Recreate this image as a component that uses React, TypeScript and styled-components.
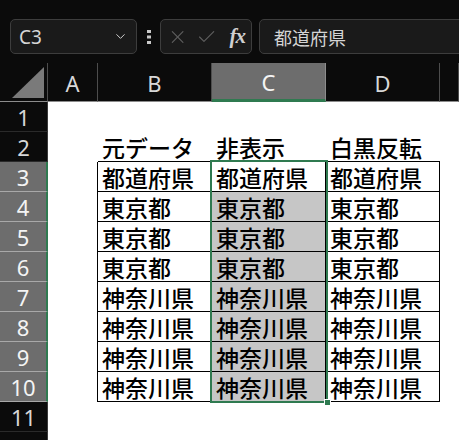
import React from 'react'
import styled, { createGlobalStyle } from 'styled-components'
import { ChevronDown, X, Check } from 'lucide-react'

const GlobalStyle = createGlobalStyle`
  html, body {
    margin: 0;
    background: #0b0b0b;
    overflow: hidden;
  }
  * {
    box-sizing: border-box;
  }
`

const GREEN = '#2f7a50'
const UI_FONT = `"Noto Sans", "Liberation Sans", Arial, sans-serif`
const CELL_FONT = `"Noto Sans CJK JP", "Noto Sans", sans-serif`

const Toolbar = styled.div`
  display: flex;
  align-items: flex-start;
  height: 63px;
  padding: 19px 0 0 10px;
  background: #0b0b0b;
  font-family: ${UI_FONT};
`

const FieldBox = styled.div<{ $width?: number }>`
  display: flex;
  align-items: center;
  height: 35px;
  width: ${({ $width }) => ($width ? `${$width}px` : 'auto')};
  flex: ${({ $width }) => ($width ? '0 0 auto' : '1 0 auto')};
  border: 1px solid #3d3d3d;
  border-radius: 5px;
  background: #1a1a1a;
  color: #d6d6d6;
`

const NameBox = styled(FieldBox)`
  justify-content: space-between;
  padding: 0 8px 0 8px;
  font-size: 19px;
`

const Grip = styled.svg`
  flex: 0 0 auto;
  margin: 11px 9px 0 10px;
`

const Buttons = styled(FieldBox)`
  gap: 8px;
  padding: 0 6px 0 6px;
  color: #5e5e5e;
`

const Fx = styled.span`
  margin-left: 4px;
  font-family: "Liberation Serif", "DejaVu Serif", serif;
  font-style: italic;
  font-weight: bold;
  font-size: 21px;
  color: #cfcfcf;
  letter-spacing: -1px;
`

const FormulaInput = styled(FieldBox)`
  margin: 0 -20px 0 7px;
  padding-left: 14px;
  font-family: ${CELL_FONT};
  font-size: 18px;
  color: #d4d4d4;
`

const Sheet = styled.div`
  display: grid;
  grid-template-columns: 48px 50px 114px 114px 114px 1fr;
  grid-template-rows: 39px repeat(12, 30px);
  background: #ffffff;
`

// every sheet item sits on its own grid line pair so the selection frame can overlap
const Slot = styled.div<{ $row: number; $col: number }>`
  grid-row: ${({ $row }) => $row};
  grid-column: ${({ $col }) => $col};
`

const Corner = styled(Slot)`
  display: flex;
  align-items: flex-end;
  justify-content: flex-end;
  padding: 0 3px 3px 0;
  background: #0b0b0b;
  border-right: 1px solid #4d4d4d;
  border-bottom: 1px solid #8c8c8c;
`

const ColHeader = styled(Slot)<{ $active?: boolean }>`
  display: flex;
  align-items: center;
  justify-content: center;
  padding-top: 2px;
  background: ${({ $active }) => ($active ? '#6d6d6d' : '#0b0b0b')};
  color: ${({ $active }) => ($active ? '#f4f4f4' : '#d8d8d8')};
  border-right: 1px solid ${({ $active }) => ($active ? '#8c8c8c' : '#4d4d4d')};
  border-bottom: ${({ $active }) => ($active ? `3px solid ${GREEN}` : '1px solid #8c8c8c')};
  font-family: ${UI_FONT};
  font-size: 22px;
`

const RowHeader = styled(Slot)<{ $active?: boolean }>`
  display: flex;
  align-items: center;
  justify-content: center;
  background: ${({ $active }) => ($active ? '#6d6d6d' : '#0b0b0b')};
  color: ${({ $active }) => ($active ? '#f4f4f4' : '#d8d8d8')};
  border-right: ${({ $active }) => ($active ? `2px solid ${GREEN}` : '1px solid #3a3a3a')};
  border-bottom: 1px solid ${({ $active }) => ($active ? '#a8a8a8' : '#2a2a2a')};
  font-family: ${UI_FONT};
  font-size: 22px;
  line-height: 28px;
  padding-top: 1px;
`

const Cell = styled(Slot)<{ $boxed?: boolean; $under?: boolean; $edge?: boolean; $shade?: boolean }>`
  display: flex;
  align-items: flex-end;
  padding: 0 0 0 4px;
  overflow: hidden;
  white-space: nowrap;
  background: ${({ $shade }) => ($shade ? '#c6c6c6' : '#ffffff')};
  border-right: ${({ $boxed, $edge }) => ($boxed || $edge ? '1px solid #000' : 'none')};
  border-bottom: ${({ $boxed, $under }) => ($boxed || $under ? '1px solid #000' : 'none')};
  color: #000;
  font-family: ${CELL_FONT};
  font-size: 23px;
  font-weight: 500;
  line-height: 28px;
`

const Selection = styled.div`
  position: relative;
  grid-column: 4;
  grid-row: 4 / 12;
  margin: -2px -2px -1px -2px;
  border: 2px solid ${GREEN};
  pointer-events: none;
`

const FillHandle = styled.span`
  position: absolute;
  right: -5px;
  bottom: -5px;
  width: 7px;
  height: 7px;
  background: ${GREEN};
  border: 1px solid #fff;
`

const rows: string[][] = [
  ['', '', '', ''],
  ['', '元データ', '非表示', '白黒反転'],
  ['', '都道府県', '都道府県', '都道府県'],
  ['', '東京都', '東京都', '東京都'],
  ['', '東京都', '東京都', '東京都'],
  ['', '東京都', '東京都', '東京都'],
  ['', '神奈川県', '神奈川県', '神奈川県'],
  ['', '神奈川県', '神奈川県', '神奈川県'],
  ['', '神奈川県', '神奈川県', '神奈川県'],
  ['', '神奈川県', '神奈川県', '神奈川県'],
  ['', '', '', ''],
  ['', '', '', ''],
]

const columns = ['A', 'B', 'C', 'D', '']

export default function App() {
  return (
    <>
      <GlobalStyle />
      <Toolbar>
        <NameBox $width={127}>
          <span>C3</span>
          <ChevronDown size={15} strokeWidth={1.6} color="#cfcfcf" />
        </NameBox>
        <Grip width="4" height="14" viewBox="0 0 4 14">
          <rect x="0" y="0" width="4" height="3" fill="#c8c8c8" />
          <rect x="0" y="5.5" width="4" height="3" fill="#c8c8c8" />
          <rect x="0" y="11" width="4" height="3" fill="#c8c8c8" />
        </Grip>
        <Buttons $width={92}>
          <X size={22} strokeWidth={1.3} />
          <Check size={22} strokeWidth={1.3} />
          <Fx>fx</Fx>
        </Buttons>
        <FormulaInput>都道府県</FormulaInput>
      </Toolbar>
      <Sheet>
        <Corner $row={1} $col={1}>
          <svg width="32" height="31" viewBox="0 0 32 31">
            <polygon points="0,31 32,0 32,31" fill="#7a7a7a" />
          </svg>
        </Corner>
        {columns.map((c, i) => (
          <ColHeader key={i} $row={1} $col={i + 2} $active={c === 'C'}>
            {c}
          </ColHeader>
        ))}
        {rows.map((row, r) => {
          const n = r + 1
          const inTable = n >= 3 && n <= 10
          return (
            <React.Fragment key={n}>
              <RowHeader $row={n + 1} $col={1} $active={inTable}>
                {n}
              </RowHeader>
              {row.map((text, c) => (
                <Cell
                  key={c}
                  $row={n + 1}
                  $col={c + 2}
                  $boxed={inTable && c > 0}
                  $edge={inTable && c === 0}
                  $under={n === 2 && c > 0}
                  $shade={c === 2 && n >= 4 && n <= 10}
                >
                  {text}
                </Cell>
              ))}
              <Cell $row={n + 1} $col={6} />
            </React.Fragment>
          )
        })}
        <Selection>
          <FillHandle />
        </Selection>
      </Sheet>
    </>
  )
}
